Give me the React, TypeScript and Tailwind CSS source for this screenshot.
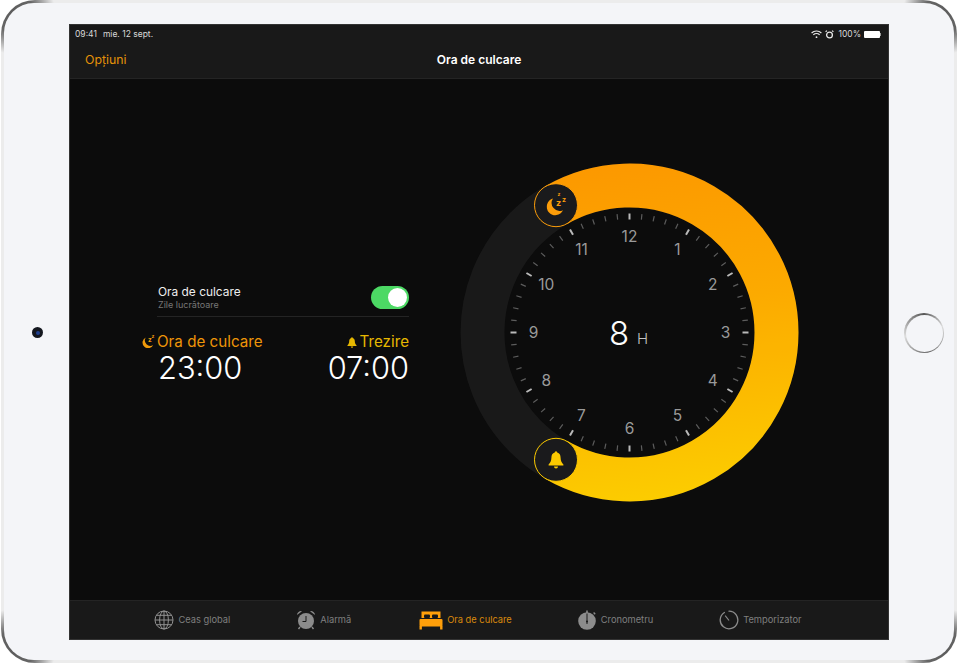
import React from "react";

const CX = 170.5;
const CY = 169.5;

function polar(r: number, deg: number) {
  const a = ((deg - 90) * Math.PI) / 180;
  return { x: CX + r * Math.cos(a), y: CY + r * Math.sin(a) };
}

const BELL =
  "M0 -8.5 C-1 -8.5 -1.2 -7.7 -1.2 -7.2 C-3.6 -6.6 -4.5 -4.6 -4.6 -2 C-4.7 1 -5.5 3 -7.4 4.7 L-7.4 5.7 L7.4 5.7 L7.4 4.7 C5.5 3 4.7 1 4.6 -2 C4.5 -4.6 3.6 -6.6 1.2 -7.2 C1.2 -7.7 1 -8.5 0 -8.5 Z";

function Clock() {
  const start = polar(147, -30);
  const end = polar(147, 210);
  const ticks = Array.from({ length: 60 }, (_, i) => i);
  const hours = [12, 1, 2, 3, 4, 5, 6, 7, 8, 9, 10, 11];
  return (
    <svg width="341" height="340" viewBox="0 0 341 340" className="block shrink-0 opacity-[0.99]">
      <defs>
        <linearGradient id="band" gradientUnits="userSpaceOnUse" x1="120" y1="0" x2="170" y2="340">
          <stop offset="0" stopColor="#ff9a00" />
          <stop offset="0.45" stopColor="#ffac00" />
          <stop offset="1" stopColor="#ffcf00" />
        </linearGradient>
      </defs>
      <circle cx={CX} cy={CY} r="147" fill="none" stroke="#1a1a1a" strokeWidth="44" />
      <path
        d={`M ${start.x} ${start.y} A 147 147 0 1 1 ${end.x} ${end.y}`}
        fill="none"
        stroke="url(#band)"
        strokeWidth="44"
      />
      {ticks.map((i) => {
        const major = i % 5 === 0;
        const a = polar(119, i * 6);
        const b = polar(major ? 113 : 113.5, i * 6);
        return (
          <line
            key={i}
            x1={a.x}
            y1={a.y}
            x2={b.x}
            y2={b.y}
            stroke={major ? "#bdbdbd" : "#5e5e5e"}
            strokeWidth={major ? 2 : 1.2}
          />
        );
      })}
      {hours.map((h, i) => {
        const p = polar(96, i * 30);
        return (
          <text key={h} x={p.x} y={p.y + 5.5} textAnchor="middle" fontSize="15.5" fill="#9c9c9c">
            {h}
          </text>
        );
      })}
      <text x="160" y="181.5" textAnchor="middle" fontSize="33" fontWeight="300" fill="#ffffff">
        8
      </text>
      <text x="183.5" y="181" textAnchor="middle" fontSize="15" fontWeight="300" fill="#c4c4c4">
        H
      </text>

      <circle cx={start.x} cy={start.y} r="21.5" fill="#1b1b1d" stroke="#ff9f0a" strokeWidth="1" />
      <g transform={`translate(${start.x} ${start.y})`} fill="#ff9f0a">
        <path d="M-3 -6.7 A8.5 8.5 0 1 0 7 5 A8 8 0 0 1 -3 -6.7 Z" />
        <text x="0" y="1" fontSize="9" fontWeight="700">z</text>
        <text x="6" y="-3" fontSize="7" fontWeight="700">z</text>
        <text x="1.6" y="-9" fontSize="5" fontWeight="700">z</text>
      </g>

      <circle cx={end.x} cy={end.y} r="21.5" fill="#1b1b1d" stroke="#ffcc00" strokeWidth="1" />
      <g transform={`translate(${end.x} ${end.y})`} fill="#ffcc00">
        <path d={BELL} />
        <path d="M-2 6.6 L2 6.6 A2 2 0 0 1 -2 6.6 Z" />
      </g>
    </svg>
  );
}

function MoonSmall() {
  return (
    <svg width="14" height="15" viewBox="0 0 14 15" className="shrink-0 opacity-[0.99]" fill="#f39c0a">
      <path d="M3.8 4.5 A5.6 5.6 0 1 0 11.2 12 A5.4 5.4 0 0 1 3.8 4.5 Z" />
      <text x="6" y="8.5" fontSize="6.5" fontWeight="700">z</text>
      <text x="9.5" y="4.5" fontSize="5" fontWeight="700">z</text>
    </svg>
  );
}

function BellSmall() {
  return (
    <svg width="10" height="11" viewBox="-8 -9 16 18" className="shrink-0" fill="#e6b800">
      <path d={BELL} />
      <path d="M-2 6.6 L2 6.6 A2 2 0 0 1 -2 6.6 Z" />
    </svg>
  );
}

function GlobeIcon() {
  return (
    <svg width="20" height="20" viewBox="0 0 20 20" fill="none" stroke="#919191" strokeWidth="1">
      <circle cx="10" cy="10" r="9" />
      <ellipse cx="10" cy="10" rx="4.4" ry="9" />
      <line x1="10" y1="1" x2="10" y2="19" />
      <line x1="1" y1="10" x2="19" y2="10" />
      <path d="M2.4 5.3 H17.6 M2.4 14.7 H17.6" />
    </svg>
  );
}

function AlarmIcon() {
  return (
    <svg width="20" height="20" viewBox="0 0 20 20">
      <circle cx="10" cy="11" r="8" fill="#8c8c8c" />
      <path d="M1 5 A4 4 0 0 1 6 1.2 Z M19 5 A4 4 0 0 0 14 1.2 Z" fill="#8c8c8c" />
      <path d="M4 17 L2.5 19 M16 17 L17.5 19" stroke="#8c8c8c" strokeWidth="1.4" />
      <path d="M10 6 V11.5 H6.5" stroke="#1a1a1a" strokeWidth="1" fill="none" />
    </svg>
  );
}

function BedIcon() {
  return (
    <svg width="24" height="19" viewBox="0 0 24 19" fill="#ff9f0a">
      <path d="M2.5 0.5 H21.5 V7 H2.5 Z" />
      <rect x="5" y="3.5" width="6" height="3.5" rx="1" fill="#181818" />
      <rect x="13" y="3.5" width="6" height="3.5" rx="1" fill="#181818" />
      <rect x="0.5" y="8" width="23" height="7.5" rx="1" />
      <rect x="0.5" y="15" width="2.4" height="3.5" />
      <rect x="21.1" y="15" width="2.4" height="3.5" />
    </svg>
  );
}

function StopwatchIcon() {
  return (
    <svg width="20" height="20" viewBox="0 0 20 20">
      <circle cx="10" cy="11" r="8.8" fill="#8c8c8c" />
      <rect x="9.2" y="0.5" width="1.6" height="2.5" fill="#8c8c8c" />
      <path d="M16.6 2.6 L18.2 4.2" stroke="#8c8c8c" strokeWidth="1.4" />
      <path d="M10 3.5 V14" stroke="#1a1a1a" strokeWidth="1" />
      <circle cx="10" cy="11.5" r="1" fill="#1a1a1a" />
    </svg>
  );
}

function TimerIcon() {
  return (
    <svg width="20" height="20" viewBox="0 0 20 20" fill="none" stroke="#8c8c8c" strokeWidth="1.3">
      <path d="M10 1.2 A8.8 8.8 0 1 1 5.4 2.5" strokeLinecap="round" />
      <path d="M10 10.5 L6.2 5.6" strokeWidth="1.1" />
    </svg>
  );
}

function WifiIcon() {
  return (
    <svg width="11" height="9" viewBox="0 0 11 9" fill="none" stroke="#e8e8e8" strokeWidth="1.2">
      <path d="M0.6 3 A7 7 0 0 1 10.4 3" />
      <path d="M2.3 4.9 A4.6 4.6 0 0 1 8.7 4.9" />
      <circle cx="5.5" cy="7.2" r="0.9" fill="#e8e8e8" stroke="none" />
    </svg>
  );
}

function AlarmStatus() {
  return (
    <svg width="9" height="9" viewBox="0 0 9 9" fill="none" stroke="#e8e8e8">
      <circle cx="4.5" cy="5" r="2.9" strokeWidth="1.3" />
      <path d="M0.6 1.8 L2 0.6 M8.4 1.8 L7 0.6" strokeWidth="1.2" />
    </svg>
  );
}

function Tab({ icon, label, active }: { icon: React.ReactNode; label: string; active?: boolean }) {
  return (
    <div className={`flex items-center gap-[4px] ${active ? "ml-[2px] mr-[-1px]" : ""}`}>
      {icon}
      <span className={`text-[9.3px] ${active ? "text-[#d98a0c]" : "text-[#7f7f7f]"}`}>{label}</span>
    </div>
  );
}

export default function App() {
  return (
    <div className="w-[963px] h-[665px] bg-white overflow-hidden font-['Inter',sans-serif]">
      <div className="relative ml-[1px] w-[956px] h-[663px] rounded-[34px] p-[3px] bg-[#ececec] bg-[radial-gradient(circle_at_12px_12px,#5c5c5c_0,#666666_20px,rgba(236,236,236,0)_42px),radial-gradient(circle_at_944px_12px,#5c5c5c_0,#666666_20px,rgba(236,236,236,0)_42px),radial-gradient(circle_at_12px_651px,#5c5c5c_0,#666666_20px,rgba(236,236,236,0)_42px),radial-gradient(circle_at_944px_651px,#5c5c5c_0,#666666_20px,rgba(236,236,236,0)_42px)]">
        <div className="relative w-full h-full rounded-[30px] bg-[#f4f5f8] pl-[65px] pt-[21px]">
          <div className="w-[820px] h-[616px] flex flex-col bg-[#0c0c0c] border border-[#333333] overflow-hidden">
            <div className="h-[54px] shrink-0 bg-[#191919] border-b border-[#242424] relative">
              <div className="flex justify-between items-center h-[17px] pt-[1px] pl-[5px] pr-[7px] text-[8.5px] text-[#d8d8d8]">
                <div className="flex gap-[6px]">
                  <span>09:41</span>
                  <span>mie. 12 sept.</span>
                </div>
                <div className="flex items-center gap-[3px]">
                  <WifiIcon />
                  <AlarmStatus />
                  <span className="ml-[1px]">100%</span>
                  <div className="flex items-center">
                    <div className="w-[16px] h-[7px] rounded-[1px] bg-white" />
                    <div className="w-[1px] h-[3px] bg-[#999999]" />
                  </div>
                </div>
              </div>
              <div className="flex items-center justify-center h-[36px] relative">
                <span className="absolute left-[15px] text-[12.3px] text-[#e49208]">Opțiuni</span>
                <span className="text-[12px] font-semibold text-white">Ora de culcare</span>
              </div>
            </div>

            <div className="flex-1 flex items-center pb-[14px]">
              <div className="ml-[87px] mt-[4px] w-[252px] flex flex-col">
                <div className="flex items-center justify-between h-[32px] border-b border-[#242424] pb-[7px]">
                  <div className="flex flex-col pl-[1px]">
                    <span className="text-[11.9px] leading-[14px] text-[#eeeeee]">Ora de culcare</span>
                    <span className="text-[9px] leading-[11px] text-[#777777]">Zile lucrătoare</span>
                  </div>
                  <div className="w-[38px] h-[23px] rounded-full bg-[#4cd964] flex items-center justify-end pr-[2px]">
                    <div className="w-[19px] h-[19px] rounded-full bg-white" />
                  </div>
                </div>
                <div className="flex justify-between mt-[15px]">
                  <div className="flex flex-col">
                    <div className="relative flex items-center h-[20px] text-[15.2px] text-[#ee9508]">
                      <div className="absolute left-[-15px] top-[1px]">
                        <MoonSmall />
                      </div>
                      Ora de culcare
                    </div>
                    <span className="text-[30.8px] leading-[32px] font-light text-white pl-[1px]">23:00</span>
                  </div>
                  <div className="flex flex-col items-end">
                    <div className="flex items-center gap-[3px] h-[20px] text-[15.2px] text-[#e6b800]">
                      <BellSmall />
                      Trezire
                    </div>
                    <span className="text-[30.8px] leading-[32px] font-light text-white">07:00</span>
                  </div>
                </div>
              </div>
              <div className="ml-[50px]">
                <Clock />
              </div>
            </div>

            <div className="h-[39px] shrink-0 bg-[#191919] border-t border-[#242424] flex items-center justify-center gap-[66px] pr-[2px]">
              <Tab icon={<GlobeIcon />} label="Ceas global" />
              <Tab icon={<AlarmIcon />} label="Alarmă" />
              <Tab icon={<BedIcon />} label="Ora de culcare" active />
              <Tab icon={<StopwatchIcon />} label="Cronometru" />
              <Tab icon={<TimerIcon />} label="Temporizator" />
            </div>
          </div>

          <div className="absolute left-[28px] top-[324px] w-[11px] h-[11px] rounded-full bg-[#14171f] flex items-center justify-center">
            <div className="w-[4px] h-[4px] rounded-full bg-[#1f3f8f]" />
          </div>
          <div className="absolute left-[900px] top-[310px] w-[40px] h-[40px] rounded-full bg-[conic-gradient(#555555_0deg,#dddddd_70deg,#666666_170deg,#dddddd_260deg,#555555_360deg)] p-[1.5px]">
            <div className="w-full h-full rounded-full bg-[#f4f5f8]" />
          </div>
        </div>
      </div>
    </div>
  );
}
